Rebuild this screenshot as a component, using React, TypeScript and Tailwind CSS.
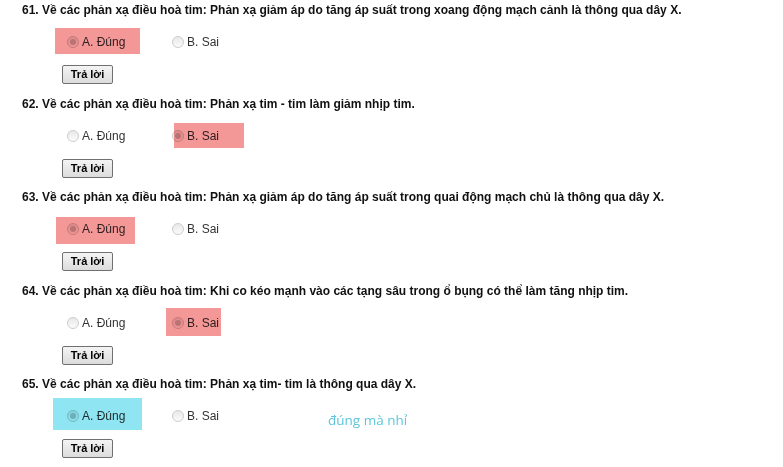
import React from "react";

type Q = {
  n: number;
  text: string;
  checked: "A" | "B";
  hl: { left: number; top: number; w: number; h: number; color: string };
  note?: string;
};

const qs: Q[] = [
  {
    n: 61,
    text: "Về các phản xạ điều hoà tim: Phản xạ giảm áp do tăng áp suất trong xoang động mạch cảnh là thông qua dây X.",
    checked: "A",
    hl: { left: 55, top: 28, w: 85, h: 26, color: "#f49797" },
  },
  {
    n: 62,
    text: "Về các phản xạ điều hoà tim: Phản xạ tim - tim làm giảm nhịp tim.",
    checked: "B",
    hl: { left: 174, top: 29, w: 70, h: 25, color: "#f49797" },
  },
  {
    n: 63,
    text: "Về các phản xạ điều hoà tim: Phản xạ giảm áp do tăng áp suất trong quai động mạch chủ là thông qua dây X.",
    checked: "A",
    hl: { left: 56, top: 30, w: 79, h: 27, color: "#f49797" },
  },
  {
    n: 64,
    text: "Về các phản xạ điều hoà tim: Khi co kéo mạnh vào các tạng sâu trong ổ bụng có thể làm tăng nhịp tim.",
    checked: "B",
    hl: { left: 166, top: 27, w: 55, h: 28, color: "#f49797" },
  },
  {
    n: 65,
    text: "Về các phản xạ điều hoà tim: Phản xạ tim- tim là thông qua dây X.",
    checked: "A",
    hl: { left: 53, top: 24, w: 89, h: 32, color: "#8fe6f2" },
    note: "đúng mà nhỉ",
  },
];

function Radio({ on }: { on: boolean }) {
  return (
    <span className="w-[12px] h-[12px] rounded-full border border-[#cdcdcd] bg-gradient-to-b from-[#e8e8e8] to-[#fbfbfb] flex items-center justify-center shrink-0">
      {on && <span className="w-[6px] h-[6px] rounded-full bg-[#c2c2c2]" />}
    </span>
  );
}

export default function App() {
  return (
    <div
      className="relative w-[783px] h-[467px] bg-white overflow-hidden"
      style={{ fontFamily: '"Liberation Sans", Arial, sans-serif' }}
    >
      {qs.map((q) => (
        <div key={q.n} className="relative h-[93.5px] pl-[22px]">
          <div className="h-5 leading-5 text-[12px] font-bold text-[#111] whitespace-nowrap">
            {q.n}. {q.text}
          </div>
          <div className="mt-[12px] h-5 flex items-center pl-[45px] text-[12px] text-[#333]">
            <div className="w-[105px] flex items-center gap-[3px]">
              <Radio on={q.checked === "A"} />
              <span>A. Đúng</span>
            </div>
            <div className="flex items-center gap-[3px]">
              <Radio on={q.checked === "B"} />
              <span>B. Sai</span>
            </div>
            {q.note && (
              <span
                className="ml-[109px] mt-[8px] text-[13.5px] text-[#5cc6dc]"
                style={{ fontFamily: '"Open Sans", "Noto Sans", sans-serif' }}
              >
                {q.note}
              </span>
            )}
          </div>
          <button className="mt-[13px] ml-[40px] w-[51px] h-[19px] rounded-[2px] border border-[#707070] bg-gradient-to-b from-[#f4f4f4] to-[#dcdcdc] text-[11px] font-bold text-black leading-none flex items-center justify-center">
            Trả lời
          </button>
          <div
            className="absolute mix-blend-multiply pointer-events-none"
            style={{
              left: q.hl.left,
              top: q.hl.top,
              width: q.hl.w,
              height: q.hl.h,
              background: q.hl.color,
            }}
          />
        </div>
      ))}
    </div>
  );
}
